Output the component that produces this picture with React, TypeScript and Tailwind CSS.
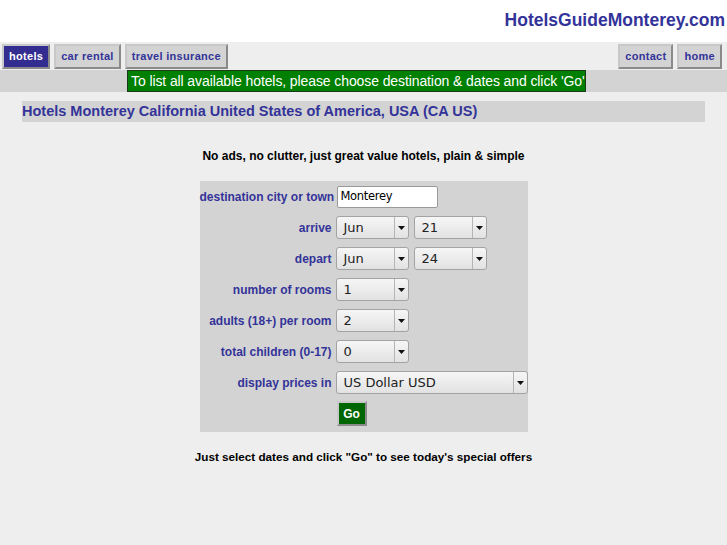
import React from 'react';

const font = { fontFamily: '"Liberation Sans", Arial, sans-serif' };
const fieldFont = { fontFamily: '"DejaVu Sans", sans-serif' };

function NavButton({ label, active }: { label: string; active?: boolean }) {
    return (
        <div
            className={
                'h-[25px] px-[5px] flex items-center border-2 border-t-[#c8c8c8] border-l-[#c8c8c8] border-b-[#8a8a8a] border-r-[#8a8a8a] text-[11px] font-bold tracking-[0.3px] ' +
                (active ? 'bg-[#332d91] text-white' : 'bg-[#d3d3d3] text-[#333399]')
            }
        >
            {label}
        </div>
    );
}

function FakeSelect({ value, width }: { value: string; width: string }) {
    return (
        <div
            className={`${width} h-[23px] flex items-stretch rounded-[3px] border border-[#a3a3a3] bg-gradient-to-b from-[#f6f6f6] to-[#e2e2e2] text-[13px] text-[#222]`}
            style={fieldFont}
        >
            <div className="flex-1 flex items-center pl-[7px]">{value}</div>
            <div className="w-[14px] flex items-center justify-center border-l border-[#b5b5b5]">
                <svg width="7" height="4" viewBox="0 0 7 4">
                    <path d="M0 0 L7 0 L3.5 4 Z" fill="#111" />
                </svg>
            </div>
        </div>
    );
}

function Row({ label, children }: { label: string; children: React.ReactNode }) {
    return (
        <div className="h-[31px] flex items-center">
            <div className="w-[136px] text-right pr-[4px] text-[12px] font-bold text-[#333399] whitespace-nowrap">{label}</div>
            <div className="flex gap-[5px] items-center">{children}</div>
        </div>
    );
}

export default function App() {
    return (
        <div className="min-h-[545px] bg-[#eeeeee]" style={font}>
            {/* header */}
            <div className="h-[42px] bg-white flex items-center justify-end pr-[2px]">
                <div className="text-[17.5px] font-bold text-[#333399] pb-[2px]">HotelsGuideMonterey.com</div>
            </div>

            {/* nav */}
            <div className="h-[28px] flex items-start pt-[2px] px-[2px]">
                <div className="flex gap-[4px]">
                    <NavButton label="hotels" active />
                    <NavButton label="car rental" />
                    <NavButton label="travel insurance" />
                </div>
                <div className="flex-1" />
                <div className="flex gap-[4px] pr-[3px]">
                    <NavButton label="contact" />
                    <NavButton label="home" />
                </div>
            </div>
            <div className="h-[22px] bg-[#d3d3d3]">
                <div className="ml-[127px] w-[459px] h-[22px] bg-[#008000] border border-[#1a3a1a] text-white text-[14px] tracking-[-0.1px] leading-[20px] pl-[3px] whitespace-nowrap">
                    To list all available hotels, please choose destination &amp; dates and click 'Go'
                </div>
            </div>

            {/* heading */}
            <div className="mx-[22px] mt-[9px] h-[21px] bg-[#d3d3d3] flex items-center">
                <h1 className="text-[14.5px] font-bold text-[#333399]">
                    Hotels Monterey California United States of America, USA (CA US)
                </h1>
            </div>

            <p className="mt-[25px] text-center text-[12px] font-bold text-black">
                No ads, no clutter, just great value hotels, plain &amp; simple
            </p>

            {/* search form */}
            <div className="mx-auto mt-[16px] w-[328px] bg-[#d3d3d3] pb-[3px]">
                <Row label="destination city or town">
                    <div
                        className="w-[101px] h-[22px] ml-[1px] bg-white border border-[#9a9a9a] rounded-[2px] flex items-center pl-[3px] text-[11.5px] text-black tracking-[-0.3px]"
                        style={fieldFont}
                    >
                        Monterey
                    </div>
                </Row>
                <Row label="arrive">
                    <FakeSelect value="Jun" width="w-[73px]" />
                    <FakeSelect value="21" width="w-[73px]" />
                </Row>
                <Row label="depart">
                    <FakeSelect value="Jun" width="w-[73px]" />
                    <FakeSelect value="24" width="w-[73px]" />
                </Row>
                <Row label="number of rooms">
                    <FakeSelect value="1" width="w-[73px]" />
                </Row>
                <Row label="adults (18+) per room">
                    <FakeSelect value="2" width="w-[73px]" />
                </Row>
                <Row label="total children (0-17)">
                    <FakeSelect value="0" width="w-[73px]" />
                </Row>
                <Row label="display prices in">
                    <FakeSelect value="US Dollar USD" width="w-[192px]" />
                </Row>
                <Row label="">
                    <button className="ml-[1px] w-[30px] h-[25px] bg-[#006600] text-white text-[12px] font-bold border-2 border-t-[#c8c8c8] border-l-[#c8c8c8] border-b-[#8a8a8a] border-r-[#8a8a8a]">
                        Go
                    </button>
                </Row>
            </div>

            <p className="mt-[16px] text-center text-[11.7px] font-bold text-black">
                Just select dates and click "Go" to see today's special offers
            </p>
        </div>
    );
}
